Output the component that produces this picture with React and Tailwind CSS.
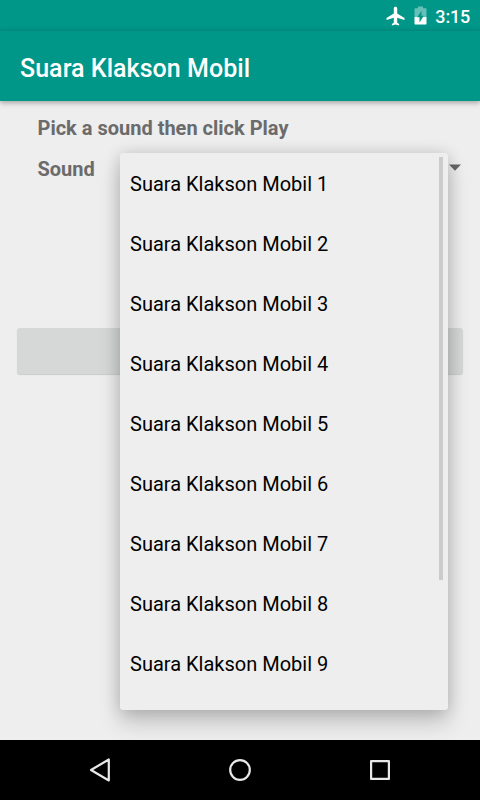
import React from "react";

const sounds = [1, 2, 3, 4, 5, 6, 7, 8, 9];

function StatusBar() {
  return (
    <div className="flex h-[30px] items-center justify-end bg-[#009688] pr-[10px] text-white">
      <svg className="mr-[9px] mt-[1px] h-[20px] w-[19px]" viewBox="0 0 19 20" fill="currentColor">
        <path d="M18.500 14v-1.900l-7.300-4.600V2.400C11.200 1.500 10.400.8 9.500.8S7.800 1.500 7.800 2.400v5.100L.5 12.100V14l7.300-2.300v5l-1.900 1.400v1.400l3.600-1 3.600 1v-1.400l-1.900-1.400v-5z" />
      </svg>
      <svg className="mr-[8px] mt-[1px] h-[19px] w-[13px]" viewBox="0 0 13 19">
        <path d="M1.300 2.200H4V.4h5v1.800h2.700c.5 0 .8.300.8.800V11H.5V3c0-.5.300-.8.800-.8z" fill="#66c0b8" />
        <path d="M.5 11h12v6.500c0 .6-.4 1-1 1h-10c-.6 0-1-.4-1-1z" fill="#fff" />
        <path d="M7.500 4.700v5.100h2.300L5.500 16.500v-5.200H3.200z" fill="#009688" />
      </svg>
      <span className="mt-[3px] text-[18px] leading-[24px] font-medium tracking-[-0.2px]">3:15</span>
    </div>
  );
}

function SoundMenu() {
  return (
    <div className="absolute left-[120px] top-[153px] h-[557px] w-[327.5px] rounded-[3px] bg-[#eeeeee] shadow-[0_12px_22px_rgba(0,0,0,0.2),0_0_16px_rgba(0,0,0,0.14)]">
      <ul className="flex flex-col">
        {sounds.map((n) => (
          <li key={n} className="flex h-[60px] items-center pl-[10px] pt-[2px] text-[20px] text-black">
            Suara Klakson Mobil {n}
          </li>
        ))}
      </ul>
      <div className="absolute right-[4.500px] top-[4px] h-[423px] w-[4px] bg-[#cbcbcb]" />
    </div>
  );
}

function NavigationBar() {
  return (
    <div className="relative flex h-[60px] items-center justify-around bg-black px-[30px]">
      <svg className="h-[24px] w-[24px]" viewBox="0 0 24 24" fill="none" stroke="#e8e8e8" strokeWidth="2.200" strokeLinejoin="round">
        <path d="M20.800 1.500v21L3 12z" />
      </svg>
      <svg className="h-[24px] w-[24px]" viewBox="0 0 24 24" fill="none" stroke="#e8e8e8" strokeWidth="2.200">
        <circle cx="12" cy="12" r="9.800" />
      </svg>
      <svg className="h-[24px] w-[24px]" viewBox="0 0 24 24" fill="none" stroke="#e8e8e8" strokeWidth="2.200" strokeLinejoin="round">
        <rect x="3.100" y="3.100" width="17.800" height="17.800" />
      </svg>
    </div>
  );
}

export default function App() {
  return (
    <div className="relative flex h-[800px] w-[480px] flex-col overflow-hidden bg-[#eeeeee] font-[Roboto,sans-serif]">
      <StatusBar />
      <header className="relative flex h-[71px] items-center border-t border-[#00897c] bg-[#009688] pl-[20px] pt-[5px] shadow-[0_2px_5px_rgba(0,0,0,0.3)]">
        <h1 className="text-[25px] font-medium tracking-[0.04px] text-white">Suara Klakson Mobil</h1>
      </header>
      <main className="relative flex flex-1 flex-col text-[20px] font-bold text-[#6b6b6b]">
        <p className="mt-[13px] pl-[37.5px] leading-[28px]">Pick a sound then click Play</p>
        <div className="mt-[12px] flex items-center justify-between pl-[37.5px] pr-[19px] leading-[30px]">
          <span>Sound</span>
          <svg className="mb-[3px] h-[7px] w-[12px]" viewBox="0 0 12 7" fill="#666666">
            <path d="M0 .5h12L6 6.800z" />
          </svg>
        </div>
        <button className="mx-[17px] mt-[144px] h-[46px] rounded-[3px] bg-[#d6d8d7] shadow-[0_1px_1px_rgba(0,0,0,0.15)]" aria-label="Play" />
      </main>
      <SoundMenu />
      <NavigationBar />
    </div>
  );
}
